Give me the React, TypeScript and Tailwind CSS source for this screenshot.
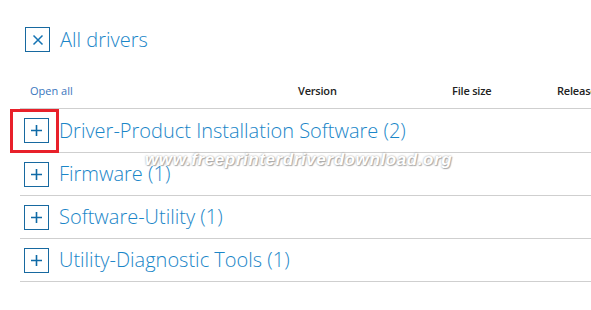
import React from "react";

const groups = [
  "Driver-Product Installation Software (2)",
  "Firmware (1)",
  "Software-Utility (1)",
  "Utility-Diagnostic Tools (1)",
];

function PlusBox() {
  return (
    <div className="w-[25px] h-[25px] border border-[#1769a0] flex items-center justify-center shrink-0">
      <svg width="13" height="13" viewBox="0 0 13 13">
        <path d="M6.5 1v11M1 6.5h11" stroke="#0f6aa6" strokeWidth="1.6" />
      </svg>
    </div>
  );
}

export default function App() {
  return (
    <div className="w-[591px] h-[310px] bg-white overflow-hidden relative font-['Open_Sans',sans-serif]">
      <div className="pl-5 pt-[27px] w-[720px]">
        <div className="flex items-center gap-[10px] pl-[5px]">
          <div className="w-[25px] h-[25px] border border-[#1769a0] flex items-center justify-center">
            <svg width="12" height="12" viewBox="0 0 12 12">
              <path d="M1.5 1.5l9 9M10.5 1.5l-9 9" stroke="#1473b3" strokeWidth="1.5" />
            </svg>
          </div>
          <span className="text-[20px] font-light text-[#1a86c8] leading-none">All drivers</span>
        </div>

        <div className="mt-[23px] h-[34px] flex items-center border-b border-[#cfcfcf] text-[11px]">
          <span className="pl-[10px] w-[278px] text-[#3a76bd]">Open all</span>
          <span className="w-[154px] font-semibold text-[#222] tracking-[-0.2px]">Version</span>
          <span className="w-[105px] font-semibold text-[#222] tracking-[-0.2px]">File size</span>
          <span className="font-semibold text-[#222] tracking-[-0.2px] whitespace-nowrap">Release date</span>
        </div>

        {groups.map((g, i) => (
          <div
            key={g}
            className={`${i === 0 ? "h-[44px]" : "h-[43px]"} flex items-center gap-[10px] pl-[4px] border-b border-[#cfcfcf]`}
          >
            <PlusBox />
            <span className="text-[20px] font-light text-[#1a86c8] leading-none">{g}</span>
          </div>
        ))}
      </div>

      <div className="absolute left-[10px] top-[109px] w-[49px] h-[44px] border-[3px] border-[#e8202a]" />

      <div className="absolute left-[145px] top-[147px] text-[17px] font-bold italic tracking-[0.6px] text-white font-['Liberation_Sans',sans-serif] [text-shadow:0_0_2px_#9a9a9a,1px_1px_1px_#b0b0b0]">
        www.freeprinterdriverdownload.org
      </div>
    </div>
  );
}
